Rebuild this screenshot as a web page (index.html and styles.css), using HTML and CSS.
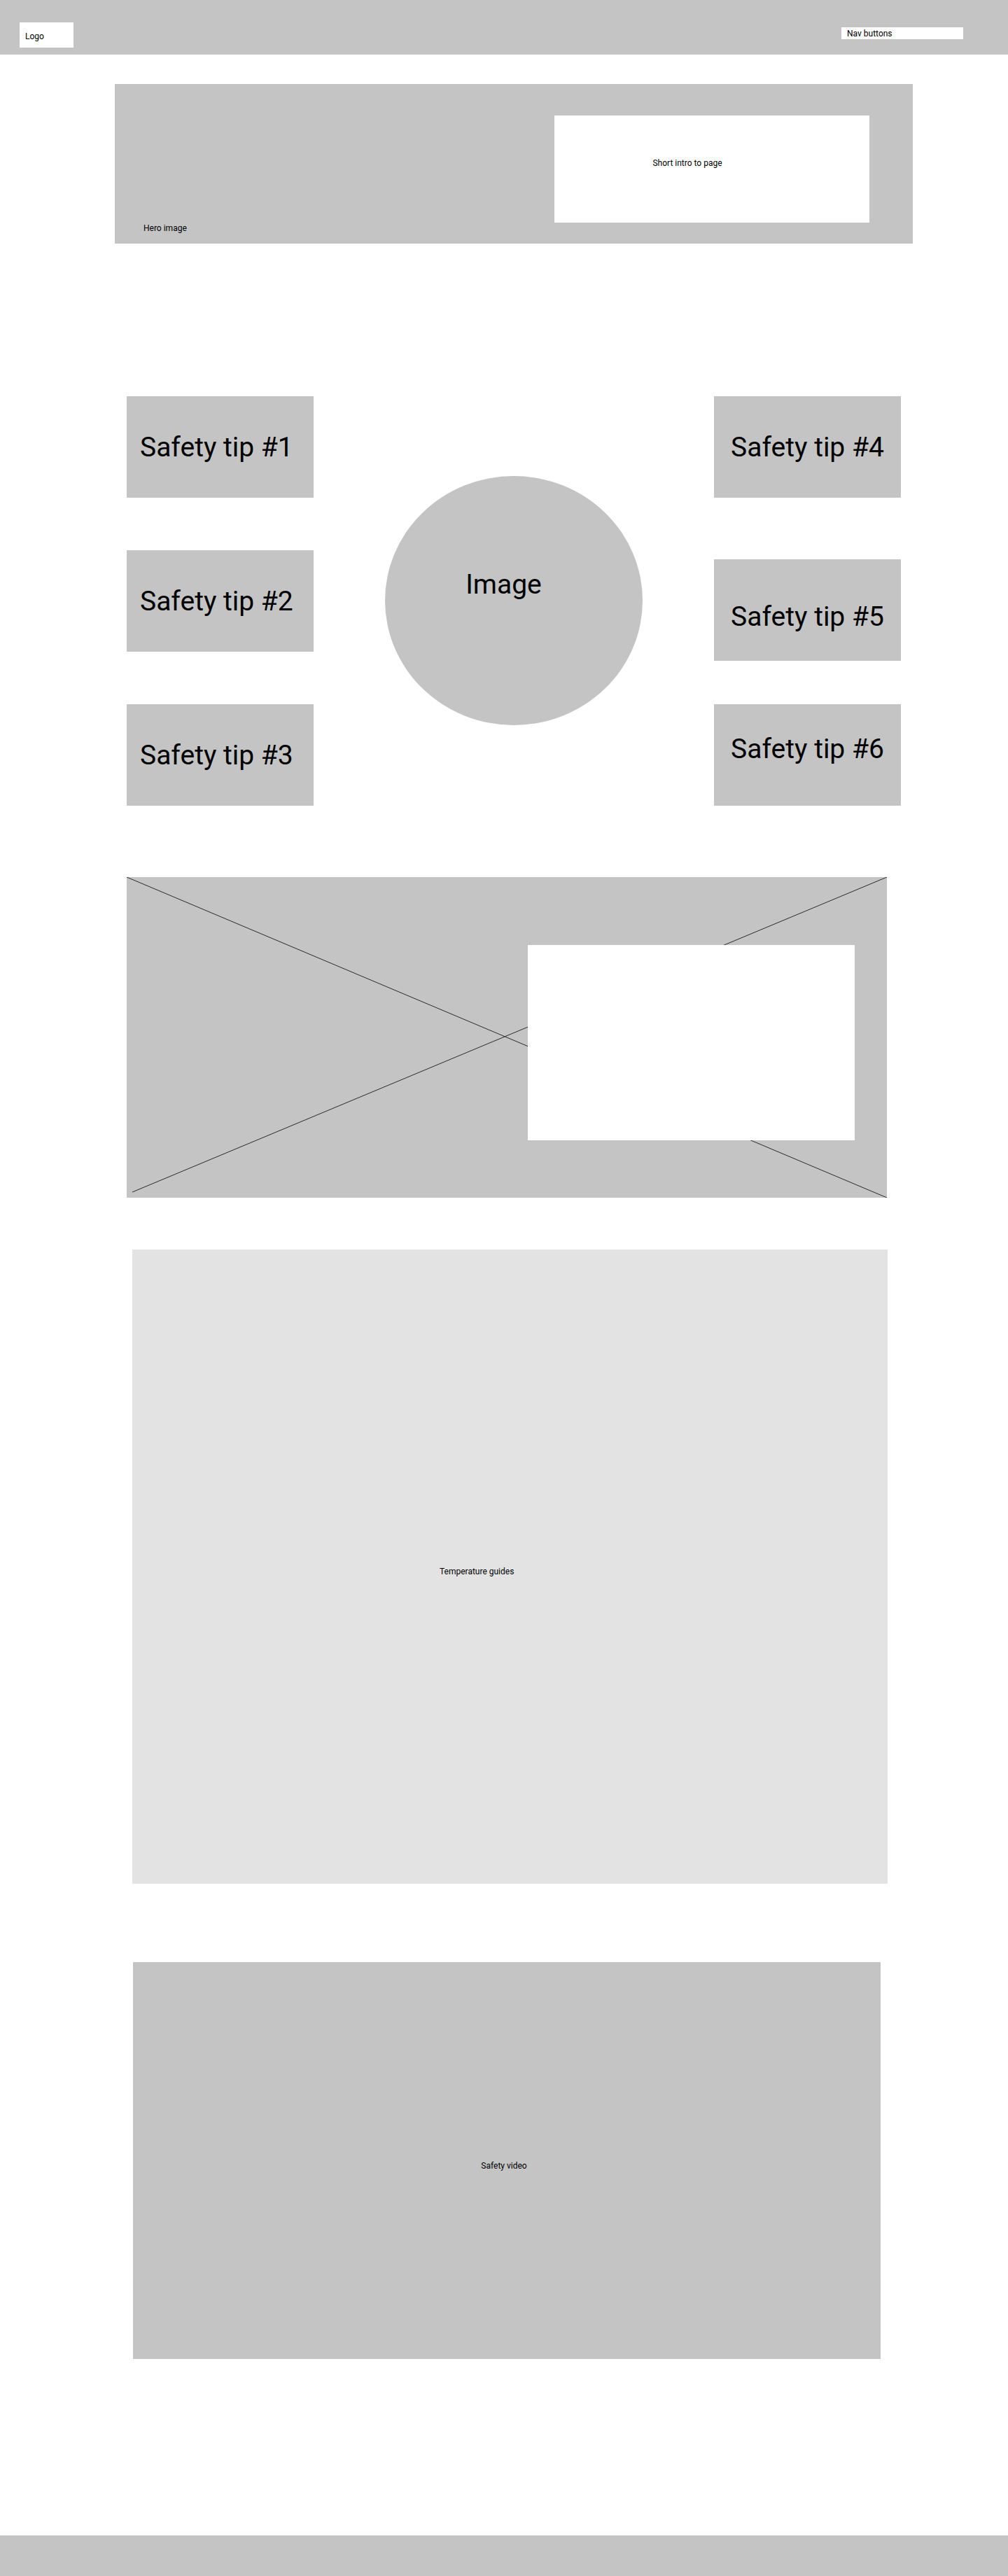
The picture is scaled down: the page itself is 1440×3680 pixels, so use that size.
FILE: index.html
```html
<!DOCTYPE html>
<html>
<head>
  <title>Food Safety</title>
  <link rel="stylesheet" href="styles.css">
</head>
<body>
  <header class="topbar">
    <div class="logo">Logo</div>
    <nav class="nav">Nav buttons</nav>
  </header>

  <main>
    <section class="hero">
      <span class="hero-label">Hero image</span>
      <div class="intro">Short intro to page</div>
    </section>

    <section class="tips">
      <div class="tip-col tip-col-left">
        <div class="tip">Safety tip #1</div>
        <div class="tip">Safety tip #2</div>
        <div class="tip">Safety tip #3</div>
      </div>
      <div class="tip-image">Image</div>
      <div class="tip-col tip-col-right">
        <div class="tip">Safety tip #4</div>
        <div class="tip tip-5">Safety tip #5</div>
        <div class="tip tip-6">Safety tip #6</div>
      </div>
    </section>

    <section class="feature">
      <svg class="feature-x" viewBox="0 0 1086 458" preserveAspectRatio="none">
        <line x1="0" y1="0" x2="1086" y2="458" stroke="#2a2a2a" stroke-width="1"/>
        <line x1="1086" y1="0" x2="8" y2="450" stroke="#2a2a2a" stroke-width="1"/>
      </svg>
      <div class="feature-card"></div>
    </section>

    <section class="temps">Temperature guides</section>

    <section class="video">Safety video</section>
  </main>

  <footer class="footer"></footer>
</body>
</html>
```

FILE: styles.css
```css
body { margin: 0; font-family: Roboto, "Liberation Sans", sans-serif; color: #000; background: #fff; }

.topbar { height: 78px; background: #c4c4c4; display: flex; justify-content: space-between; align-items: flex-start; padding: 32px 64px 0 28px; box-sizing: border-box; }
.logo { width: 77px; height: 36px; background: #fff; font-size: 12px; display: flex; align-items: center; padding: 4px 0 0 8px; box-sizing: border-box; }
.nav { width: 174px; height: 17px; background: #fff; font-size: 12px; line-height: 15px; margin-top: 7px; padding: 2px 0 0 8px; box-sizing: border-box; }

.hero { width: 1140px; height: 228px; margin: 42px 0 0 164px; background: #c4c4c4; display: flex; justify-content: space-between; align-items: flex-start; padding: 45px 62px 0 41px; box-sizing: border-box; }
.hero-label { align-self: flex-end; font-size: 12px; line-height: 14px; margin-bottom: 15px; }
.intro { width: 450px; height: 153px; background: #fff; font-size: 12px; display: flex; align-items: center; justify-content: center; padding: 0 70px 17px 0; box-sizing: border-box; }

.tips { display: flex; align-items: flex-start; gap: 102px; margin: 218px 0 0 181px; }
.tip-col { display: flex; flex-direction: column; width: 267px; }
.tip-col-left { gap: 75px; }
.tip { height: 145px; background: #c4c4c4; font-size: 39px; display: flex; align-items: center; box-sizing: border-box; white-space: nowrap; }
.tip-col-left .tip { padding-left: 19px; }
.tip-col-right .tip { justify-content: center; }
.tip-5 { margin-top: 88px; padding-top: 19px; }
.tip-6 { margin-top: 62px; padding-bottom: 17px; }
.tip-image { width: 368px; height: 356px; margin-top: 114px; border-radius: 50%; background: #c4c4c4; font-size: 39px; display: flex; align-items: center; justify-content: center; padding: 0 29px 46px 0; box-sizing: border-box; }

.feature { position: relative; width: 1086px; height: 458px; margin: 102px 0 0 181px; background: #c4c4c4; display: flex; justify-content: flex-end; align-items: flex-start; padding: 97px 46px 0 0; box-sizing: border-box; }
.feature-x { position: absolute; top: 0; left: 0; width: 100%; height: 100%; }
.feature-card { position: relative; width: 467px; height: 279px; background: #fff; }

.temps { width: 1079px; height: 906px; margin: 74px 0 0 189px; background: #e3e3e3; font-size: 12px; display: flex; align-items: center; padding: 14px 0 0 439px; box-sizing: border-box; }

.video { width: 1068px; height: 567px; margin: 112px 0 0 190px; background: #c4c4c4; font-size: 12px; display: flex; align-items: center; justify-content: center; padding: 15px 8px 0 0; box-sizing: border-box; }

.footer { height: 58px; margin-top: 252px; background: #c4c4c4; }
```
